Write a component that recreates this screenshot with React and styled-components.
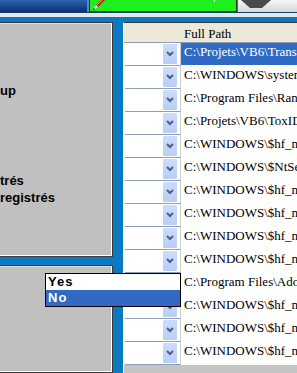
import React from 'react'
import styled, { createGlobalStyle } from 'styled-components'

const GlobalStyle = createGlobalStyle`
  html, body {
    margin: 0;
    padding: 0;
    overflow: hidden;
    background: #0b78c2;
  }
`

const Screen = styled.div`
  position: relative;
  width: 297px;
  height: 373px;
  overflow: hidden;
  display: flex;
  flex-direction: column;
  background: #0b78c2;
`

const TopBar = styled.div`
  display: flex;
  height: 12px;
  border-bottom: 1px solid #1b3f66;
  flex-shrink: 0;
`

const TitleBlock = styled.div`
  width: 87px;
  background: linear-gradient(#2b65b0, #0c2f72);
  border-right: 2px solid #5f86c4;
`

const GreenButton = styled.div`
  position: relative;
  width: 143px;
  background: #1ef01e;
  border: 1px solid #1d3b1d;
  border-top: none;
  display: flex;
  align-items: flex-start;
  padding-left: 3px;
`

const Tick = styled.span`
  position: absolute;
  left: 124px;
  top: 0;
  width: 1px;
  height: 2px;
  background: #fff;
`

const GrayButton = styled.div`
  flex: 1;
  display: flex;
  align-items: flex-start;
  background: linear-gradient(#f6f6f6, #d6d6d6);
  border-left: 1px solid #6a6a6a;
  padding-left: 3px;
`

const Strip = styled.div`
  height: 4px;
  background: #e4e8ec;
  flex-shrink: 0;
`

const Main = styled.div`
  flex: 1;
  display: flex;
  gap: 10px;
  padding-top: 5px;
  min-height: 0;
`

const LeftColumn = styled.div`
  width: 113px;
  display: flex;
  flex-direction: column;
  gap: 8px;
  flex-shrink: 0;
`

const Panel = styled.div`
  height: ${(p) => (p.$grow ? 'auto' : `${p.$h}px`)};
  flex: ${(p) => (p.$grow ? 1 : 'none')};
  box-sizing: border-box;
  background: #c0c0c0;
  border: 1px solid #3a3a3a;
  border-left: none;
  box-shadow: inset -1px -1px 0 #ffffff, inset 0 1px 0 #dcdcdc;
  font-family: 'Liberation Sans', Arial, sans-serif;
  font-weight: bold;
  font-size: 13px;
  line-height: 17px;
  color: #000;
  overflow: hidden;
`

const PanelLine = styled.div`
  margin-top: ${(p) => p.$top || 0}px;
  white-space: nowrap;
`

const Grid = styled.div`
  flex: 1;
  display: flex;
  flex-direction: column;
  background: #fff;
  border-top: 1px solid #3a3a3a;
  border-left: 1px solid #fff;
  min-width: 0;
`

const Header = styled.div`
  display: flex;
  height: 19px;
  background: #ece9d8;
  border-bottom: 1px solid #8e9fb3;
  font-family: 'Liberation Serif', 'Times New Roman', serif;
  font-size: 13px;
  line-height: 18px;
`

const HeadCell = styled.div`
  width: ${(p) => (p.$w ? `${p.$w}px` : 'auto')};
  flex: ${(p) => (p.$w ? 'none' : 1)};
  padding: 2px 0 0 ${(p) => (p.$w ? 0 : 3)}px;
  white-space: nowrap;
`

const Row = styled.div`
  display: flex;
  height: 23px;
  font-family: 'Liberation Serif', 'Times New Roman', serif;
  font-size: 13px;
  line-height: 18px;
`

const ComboCell = styled.div`
  width: 56px;
  box-sizing: border-box;
  margin-left: 1px;
  border-bottom: 1px solid #8e9fb3;
  border-right: 1px solid #cfcfcf;
  display: flex;
  justify-content: flex-end;
  align-items: center;
  padding-right: 3px;
`

const DropButton = styled.div`
  width: 14px;
  height: 20px;
  background: linear-gradient(#cddcfc, #b9cdf7);
  border-radius: 1px;
  display: flex;
  align-items: center;
  justify-content: center;
`

const PathCell = styled.div`
  flex: 1;
  padding-left: 3px;
  white-space: nowrap;
  overflow: hidden;
  background: ${(p) => (p.$selected ? '#316ac5' : '#fff')};
  color: ${(p) => (p.$selected ? '#fff' : '#000')};
  height: ${(p) => (p.$selected ? '22px' : 'auto')};
`

const GridFooter = styled.div`
  flex: 1;
  background: #c4c4c4;
`

const Popup = styled.div`
  position: absolute;
  left: 45px;
  top: 273px;
  width: 134px;
  border: 1px solid #000;
  background: #fff;
  font-family: 'Liberation Sans', Arial, sans-serif;
  font-weight: bold;
  font-size: 13px;
  letter-spacing: 1px;
`

const Option = styled.div`
  height: 16px;
  line-height: 16px;
  padding-left: 2px;
  background: ${(p) => (p.$active ? '#316ac5' : '#fff')};
  color: ${(p) => (p.$active ? '#fff' : '#000')};
`

const rows = [
  'C:\\Projets\\VB6\\Transfert\\Transfert.exe',
  'C:\\WINDOWS\\system32\\msvbvm60.dll',
  'C:\\Program Files\\Random\\setup.exe',
  'C:\\Projets\\VB6\\ToxID\\ToxID.exe',
  'C:\\WINDOWS\\$hf_mig$\\KB873339\\update',
  'C:\\WINDOWS\\$NtServicePackUninstall$',
  'C:\\WINDOWS\\$hf_mig$\\KB885835\\update',
  'C:\\WINDOWS\\$hf_mig$\\KB885836\\update',
  'C:\\WINDOWS\\$hf_mig$\\KB886185\\update',
  'C:\\WINDOWS\\$hf_mig$\\KB887472\\update',
  'C:\\Program Files\\Adobe\\Acrobat 7.0',
  'C:\\WINDOWS\\$hf_mig$\\KB888302\\update',
  'C:\\WINDOWS\\$hf_mig$\\KB890046\\update',
  'C:\\WINDOWS\\$hf_mig$\\KB890859\\update',
]

const Chevron = () => (
  <svg width="8" height="6" viewBox="0 0 8 6">
    <polyline points="1 1 4 4 7 1" fill="none" stroke="#4d6185" strokeWidth="2" />
  </svg>
)

const Pen = () => (
  <svg width="12" height="10" viewBox="0 0 12 10">
    <line x1="11" y1="-1" x2="4" y2="6" stroke="#c81818" strokeWidth="3" />
    <line x1="10" y1="-1" x2="4" y2="5" stroke="#ff9a9a" strokeWidth="1" />
    <line x1="4" y1="6" x2="1" y2="9" stroke="#f4f4f4" strokeWidth="2" />
    <line x1="1.5" y1="8.5" x2="0" y2="10" stroke="#333" strokeWidth="1.5" />
  </svg>
)

const StopShape = () => (
  <svg width="30" height="9" viewBox="0 0 30 9" style={{ display: 'block' }}>
    <polygon points="0 0 30 0 21 8 9 8" fill="#4a4a4a" />
  </svg>
)

export default function App() {
  return (
    <Screen>
      <GlobalStyle />
      <TopBar>
        <TitleBlock />
        <GreenButton>
          <Pen />
          <Tick />
        </GreenButton>
        <GrayButton>
          <StopShape />
        </GrayButton>
      </TopBar>
      <Strip />
      <Main>
        <LeftColumn>
          <Panel $h={235}>
            <PanelLine $top={59}>up</PanelLine>
            <PanelLine $top={73}>trés</PanelLine>
            <PanelLine>registrés</PanelLine>
          </Panel>
          <Panel $grow />
        </LeftColumn>
        <Grid>
          <Header>
            <HeadCell $w={57} />
            <HeadCell>Full Path</HeadCell>
          </Header>
          {rows.map((path, i) => (
            <Row key={i}>
              <ComboCell>
                <DropButton>
                  <Chevron />
                </DropButton>
              </ComboCell>
              <PathCell $selected={i === 0}>{path}</PathCell>
            </Row>
          ))}
          <GridFooter />
        </Grid>
      </Main>
      <Popup>
        <Option>Yes</Option>
        <Option $active>No</Option>
      </Popup>
    </Screen>
  )
}
